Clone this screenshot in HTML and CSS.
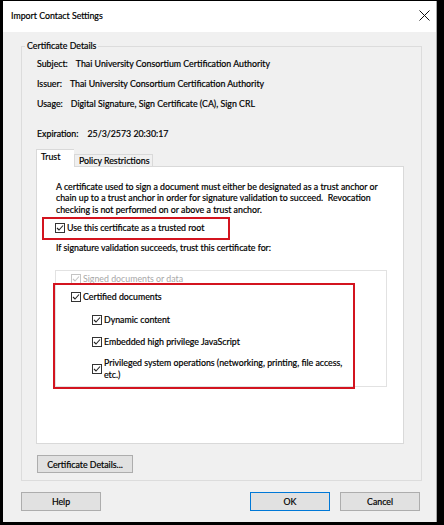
FILE: index.html
```html
<!DOCTYPE html>
<html>
<head>
<meta charset="utf-8">
<link rel="stylesheet" href="styles.css">
</head>
<body>
<div class="window">
  <div class="titlebar">
    <span class="title">Import Contact Settings</span>
    <svg class="close" width="11" height="11" viewBox="0 0 11 11"><path d="M0.5 0.5 L10.5 10.5 M10.5 0.5 L0.5 10.5" stroke="#111" stroke-width="1" fill="none"/></svg>
  </div>
  <div class="content">
    <fieldset class="group">
      <legend>Certificate Details</legend>
      <div class="row"><span class="lbl">Subject:</span><span>Thai University Consortium Certification Authority</span></div>
      <div class="row"><span class="lbl">Issuer:</span><span>Thai University Consortium Certification Authority</span></div>
      <div class="row"><span class="lbl">Usage:</span><span>Digital Signature, Sign Certificate (CA), Sign CRL</span></div>
      <div class="row exp"><span class="lbl wide">Expiration:</span><span>25/3/2573 20:30:17</span></div>

      <div class="tabs">
        <div class="tab active">Trust</div>
        <div class="tab">Policy Restrictions</div>
      </div>
      <div class="panel">
        <p class="para">A certificate used to sign a document must either be designated as a trust anchor or<br>chain up to a trust anchor in order for signature validation to succeed.&nbsp; Revocation<br>checking is not performed on or above a trust anchor.</p>
        <div class="redbox1">
          <label class="check">
            <svg class="cb" width="10" height="10" viewBox="0 0 10 10"><rect x="0.5" y="0.5" width="9" height="9" fill="#fff" stroke="#333"/><path d="M2 5 L4 7 L8 2.5" stroke="#222" stroke-width="1.1" fill="none"/></svg>
            <span>Use this certificate as a trusted root</span>
          </label>
        </div>
        <p class="ifsig">If signature validation succeeds, trust this certificate for:</p>
        <div class="inner">
          <label class="check disabled r-signed">
            <svg class="cb" width="10" height="10" viewBox="0 0 10 10"><rect x="0.5" y="0.5" width="9" height="9" fill="#fff" stroke="#c4c4c4"/><path d="M2 5 L4 7 L8 2.5" stroke="#c4c4c4" stroke-width="1.1" fill="none"/></svg>
            <span>Signed documents or data</span>
          </label>
          <label class="check r-cert">
            <svg class="cb" width="10" height="10" viewBox="0 0 10 10"><rect x="0.5" y="0.5" width="9" height="9" fill="#fff" stroke="#333"/><path d="M2 5 L4 7 L8 2.5" stroke="#222" stroke-width="1.1" fill="none"/></svg>
            <span>Certified documents</span>
          </label>
          <label class="check sub r-dyn">
            <svg class="cb" width="10" height="10" viewBox="0 0 10 10"><rect x="0.5" y="0.5" width="9" height="9" fill="#fff" stroke="#333"/><path d="M2 5 L4 7 L8 2.5" stroke="#222" stroke-width="1.1" fill="none"/></svg>
            <span>Dynamic content</span>
          </label>
          <label class="check sub r-emb">
            <svg class="cb" width="10" height="10" viewBox="0 0 10 10"><rect x="0.5" y="0.5" width="9" height="9" fill="#fff" stroke="#333"/><path d="M2 5 L4 7 L8 2.5" stroke="#222" stroke-width="1.1" fill="none"/></svg>
            <span>Embedded high privilege JavaScript</span>
          </label>
          <label class="check sub r-priv">
            <svg class="cb" width="10" height="10" viewBox="0 0 10 10"><rect x="0.5" y="0.5" width="9" height="9" fill="#fff" stroke="#333"/><path d="M2 5 L4 7 L8 2.5" stroke="#222" stroke-width="1.1" fill="none"/></svg>
            <span>Privileged system operations (networking, printing, file access,<br>etc.)</span>
          </label>
          <div class="redbox2"></div>
        </div>
      </div>
      <button class="btn certbtn">Certificate Details...</button>
    </fieldset>
    <div class="footer">
      <button class="btn">Help</button>
      <div class="right">
        <button class="btn ok">OK</button>
        <button class="btn">Cancel</button>
      </div>
    </div>
  </div>
</div>
</body>
</html>
```
FILE: styles.css
```css
* { box-sizing: border-box; }
html, body { margin: 0; }
body {
  background: #000;
  padding: 1px 7px 3px 3px;
  font-family: "Lato", "Noto Sans", sans-serif;
  font-size: 8.8px;
  color: #000;
  -webkit-text-stroke: 0.2px currentColor;
  width: 444px;
  height: 525px;
}
.window {
  width: 434px;
  height: 521px;
  background: #f0f0f0;
  border-right: 1px solid #a8a8a8;
  display: flex;
  flex-direction: column;
}
.titlebar {
  height: 31px;
  background: #fff;
  display: flex;
  align-items: center;
  justify-content: space-between;
  padding: 0 6px 3px 8px;
}
.title { font-size: 8.8px; }
.content { padding-top: 7px; }
.group {
  margin: 0 14px 0 18px;
  padding: 0 0 7px 0;
  border: 1px solid #dcdcdc;
  min-width: 0;
}
.group legend {
  margin-left: 3px;
  padding: 0 2px;
  line-height: 14px;
}
.row {
  line-height: 20px;
  padding-left: 15px;
  display: flex;
}
.row:first-of-type { margin-top: 1px; }
.lbl { margin-right: 8px; }
.wide { margin-right: 9px; }
.exp { margin-top: 10px; }
.tabs {
  display: flex;
  align-items: flex-end;
  margin: 5px 0 0 14px;
  position: relative;
  z-index: 1;
}
.tab {
  border: 1px solid #d9d9d9;
  border-bottom: none;
  background: #f0f0f0;
  height: 12px;
  line-height: 11px;
  padding: 0 3px 0 4px;
}
.tab.active {
  background: #fff;
  height: 18px;
  line-height: 14px;
  width: 38px;
  padding: 0 0 0 4px;
  margin-bottom: -1px;
  border-right: none;
}
.panel {
  position: relative;
  margin: 0 17px 0 14px;
  height: 278px;
  background: #fff;
  border: 1px solid #d9d9d9;
  padding-left: 19px;
}
.para {
  margin: 14px 0 0 0;
  line-height: 11.3px;
  white-space: nowrap;
}
.redbox1 {
  margin: 2px 0 0 -14px;
  width: 188px;
  height: 23px;
  border: 2px solid #d3141f;
  padding-left: 11px;
  display: flex;
  align-items: center;
}
.check {
  display: flex;
  align-items: center;
  line-height: 12px;
}
.cb { flex: none; margin-right: 2px; }
.ifsig {
  margin: 2px 0 0 0;
  line-height: 12px;
}
.inner {
  position: relative;
  margin: 16px 0 0 -1px;
  width: 332px;
  height: 117px;
  border: 1px solid #e2e2e2;
  padding: 2px 0 0 15px;
}
.disabled { color: #a8a8a8; -webkit-text-stroke: 0; }
.r-cert { margin-top: 6px; }
.sub { margin-left: 21px; }
.r-dyn { margin-top: 11px; }
.r-emb { margin-top: 10px; }
.r-priv { margin-top: 9px; }
.redbox2 {
  position: absolute;
  left: -3px;
  top: 12px;
  width: 302px;
  height: 106px;
  border: 2px solid #d3141f;
}
.btn {
  font-family: inherit;
  font-size: 8.8px;
  -webkit-text-stroke: 0.2px #000;
  background: #e1e1e1;
  border: 1px solid #adadad;
  color: #000;
  padding: 0;
  height: 19px;
  width: 80px;
}
.certbtn {
  display: block;
  margin: 11px 0 0 15px;
  width: 96px;
  height: 18px;
}
.footer {
  display: flex;
  justify-content: space-between;
  margin: 11px 16px 0 18px;
}
.right { display: flex; gap: 10px; }
.ok { border-color: #0078d7; }
```
